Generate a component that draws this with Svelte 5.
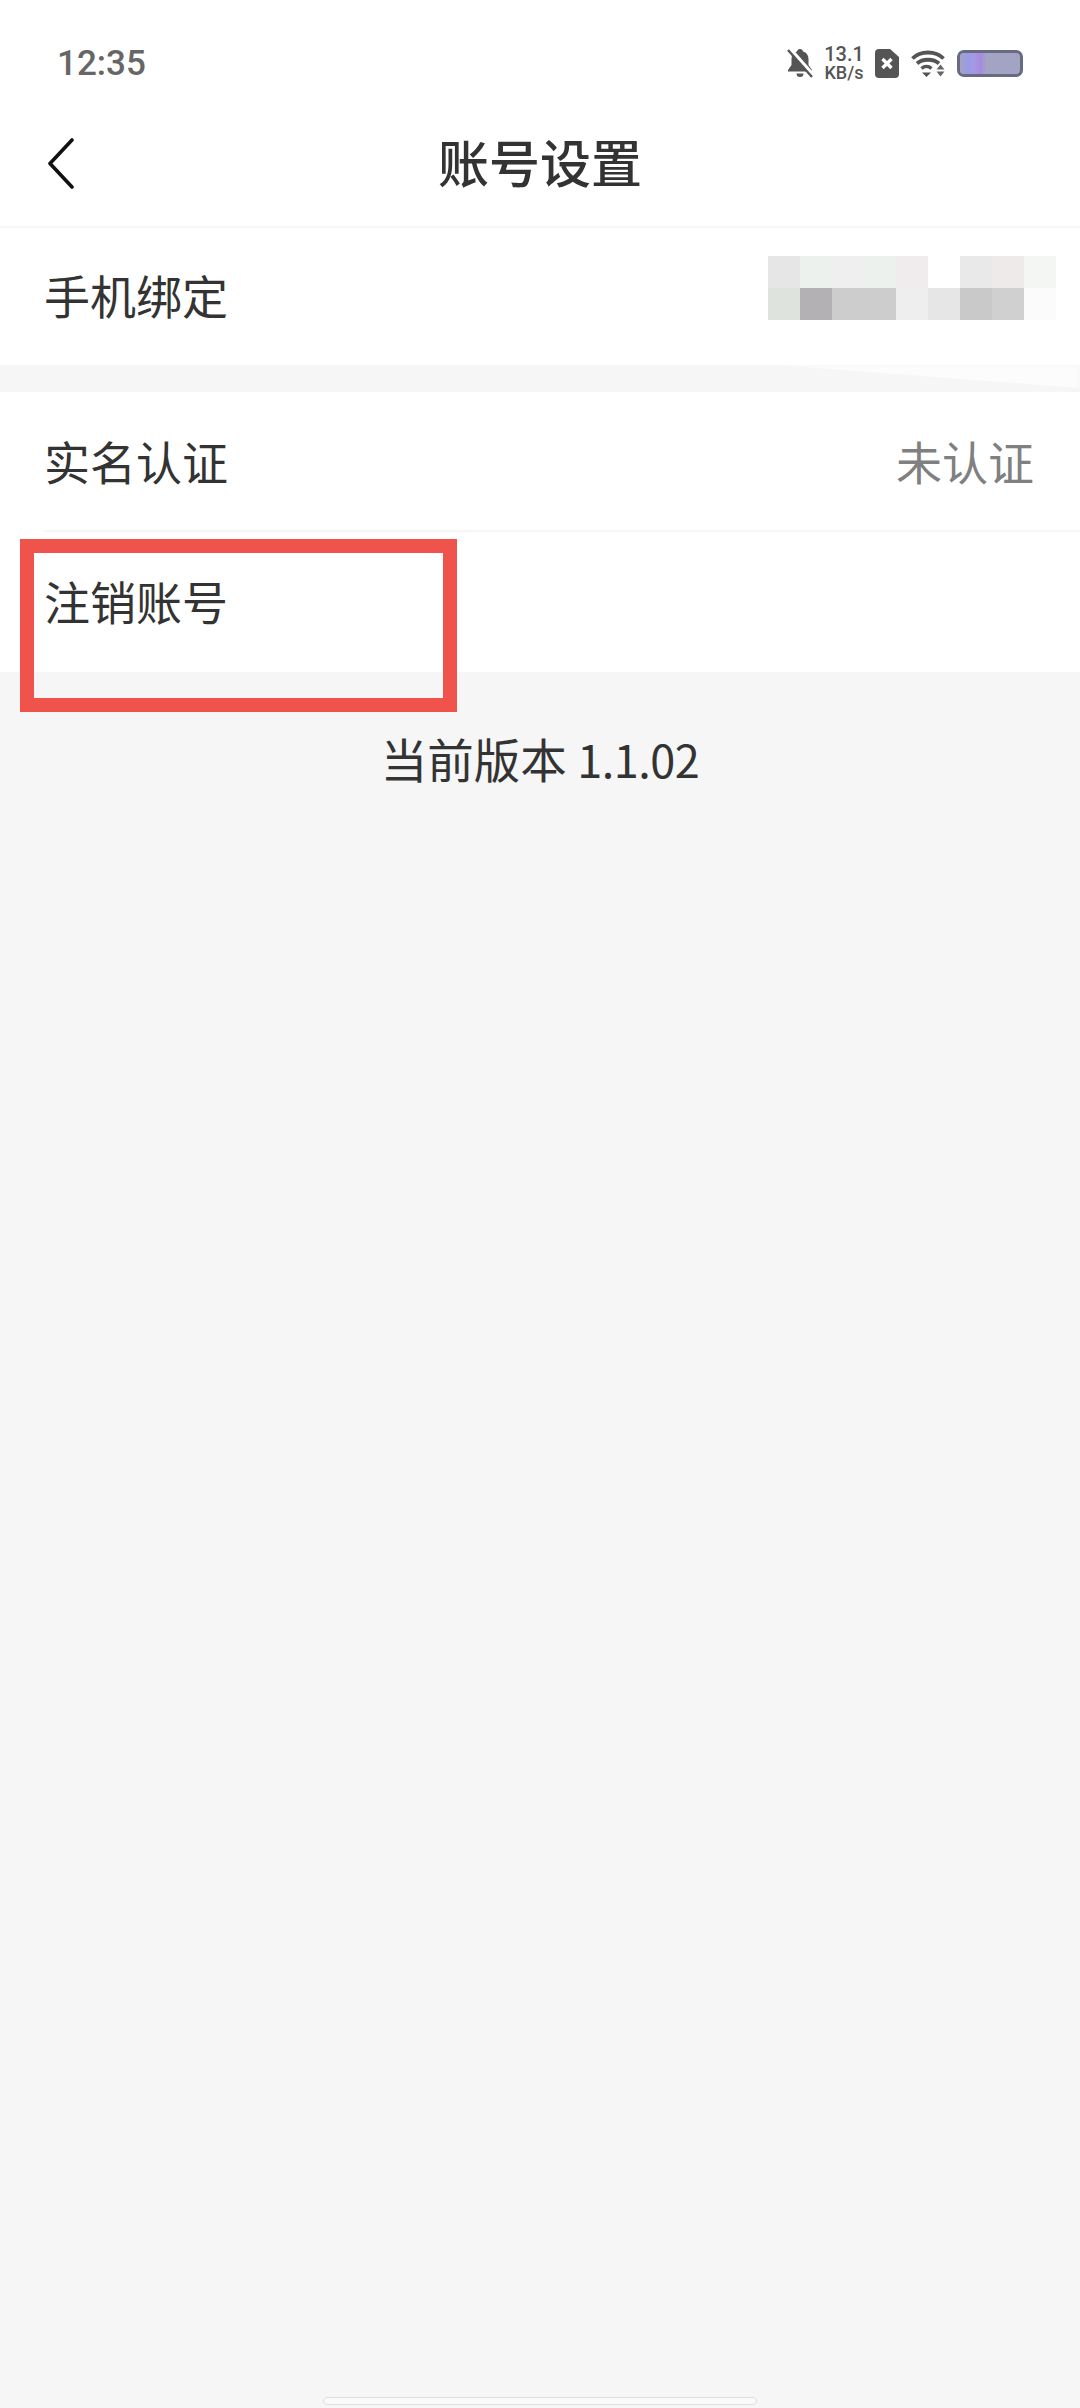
<script>
  const mosaic = [
    '#e6e6e6', '#edf1ee', '#efefef', '#edf1ee', '#f0ecee', '#ffffff', '#e8e9e8', '#efeaea', '#f4f6f4',
    '#dfe3de', '#b3b1b3', '#cdcdcd', '#cdcdcd', '#eeeeee', '#e6e6e6', '#c9c9c9', '#d0d0d0', '#fafbfa'
  ];
</script>

<div class="page">
  <header class="status">
    <span class="time">12:35</span>
    <div class="indicators">
      <svg class="bell" viewBox="0 0 26 30" width="26" height="30">
        <path d="M13 1c1.800 0 2.800 1 3 2.500 3.600 1 5.500 4 5.500 7.500v6l3.500 5v1.500H1V22l3.500-5v-6C4.500 7.500 6.400 4.500 10 3.500 10.200 2 11.200 1 13 1z" fill="#555" />
        <path d="M9.500 25.500h7a3.500 3.500 0 0 1-7 0z" fill="#555" />
        <path d="M3 1l23 26" stroke="#fff" stroke-width="4" />
        <path d="M1 2l24 27" stroke="#555" stroke-width="2.400" />
      </svg>
      <div class="speed"><span>13.1</span><span>KB/s</span></div>
      <svg class="sim" viewBox="0 0 24 29" width="24" height="29">
        <path d="M4 0h11l9 8v17a4 4 0 0 1-4 4H4a4 4 0 0 1-4-4V4a4 4 0 0 1 4-4z" fill="#555" />
        <path d="M7.500 10l9 9M16.500 10l-9 9" stroke="#fff" stroke-width="3.400" />
      </svg>
      <svg class="wifi" viewBox="0 0 34 28" width="34" height="28">
        <path d="M1.500 9.500C9.500 1.500 24.500 1.500 32.500 9.500" fill="none" stroke="#555" stroke-width="3.800" />
        <path d="M6 14.500c5.500-5 16.500-5 22 0" fill="none" stroke="#555" stroke-width="3.800" />
        <path d="M10.500 19.500c3-2.600 7-2.600 10 0" fill="none" stroke="#555" stroke-width="3.400" />
        <path d="M11 23.500h9l-4.500 4.500z" fill="#555" />
        <path d="M29.500 15.500l4 5h-8zM25.500 22.500h8l-4 5z" fill="#666" />
      </svg>
      <div class="battery"><div class="level"></div></div>
    </div>
  </header>

  <nav class="title-bar">
    <svg class="back" viewBox="0 0 30 52" width="30" height="52">
      <path d="M26 3 4 26.500 26 50" fill="none" stroke="#111" stroke-width="3.600" stroke-linecap="round" stroke-linejoin="round" />
    </svg>
    <h1>账号设置</h1>
  </nav>

  <section class="row phone">
    <span class="label">手机绑定</span>
    <div class="mosaic">
      {#each mosaic as color}
        <i style="background: {color}"></i>
      {/each}
    </div>
  </section>

  <div class="gap"></div>

  <section class="row auth">
    <span class="label">实名认证</span>
    <span class="value">未认证</span>
  </section>

  <section class="row cancel">
    <span class="label">注销账号</span>
  </section>

  <p class="version">当前版本 <span class="num">1.1.02</span></p>

  <div class="highlight"></div>
  <div class="home-bar"></div>
</div>

<style>
  :global(body) {
    margin: 0;
    background: #f6f6f6;
  }

  .page {
    position: relative;
    height: 2408px;
    overflow: hidden;
    background: #f6f6f6;
    color: #333;
    font-family: "Noto Sans CJK SC", "Noto Sans", sans-serif;
  }

  .status {
    display: flex;
    justify-content: space-between;
    align-items: center;
    height: 62px;
    padding: 32px 57px 0 57px;
    background: #fff;
  }

  .time {
    font-family: Roboto, sans-serif;
    font-size: 35px;
    font-weight: 500;
    color: #666;
  }

  .indicators {
    display: flex;
    align-items: center;
    gap: 12px;
  }

  .speed {
    display: flex;
    flex-direction: column;
    align-items: center;
    width: 38px;
    font-family: Roboto, sans-serif;
    font-size: 18px;
    font-weight: 500;
    line-height: 18px;
    color: #555;
  }

  .speed span:first-child {
    font-size: 20px;
    line-height: 20px;
  }

  .battery {
    width: 66px;
    height: 27px;
    box-sizing: border-box;
    border: 3px solid #666b80;
    border-radius: 7px;
    background: #a3a3c4;
    overflow: hidden;
  }

  .level {
    width: 26px;
    height: 100%;
    background: linear-gradient(90deg, #a3a3c4 0, #9a9ae6 30%, #a49be0 55%, #a888e0 80%, #a3a3c4 100%);
  }

  .title-bar {
    position: relative;
    display: flex;
    align-items: center;
    justify-content: center;
    height: 132px;
    background: #fff;
    border-bottom: 2px solid #f6f6f6;
  }

  .back {
    position: absolute;
    left: 46px;
    top: 43px;
  }

  h1 {
    margin: 0;
    padding-top: 2px;
    font-size: 51px;
    font-weight: 500;
    line-height: 1;
    color: #333;
  }

  .row {
    position: relative;
    display: flex;
    justify-content: space-between;
    align-items: center;
    box-sizing: border-box;
    background: #fff;
    padding: 0 46px 0 44px;
  }

  .label {
    font-size: 46px;
    line-height: 1;
    color: #333;
  }

  .phone {
    height: 137px;
    padding-right: 24px;
    padding-bottom: 6px;
  }

  .phone .mosaic {
    margin-bottom: 12px;
  }

  .gap {
    position: relative;
    height: 27px;
  }

  .gap::after {
    content: "";
    position: absolute;
    inset: 0;
    background: #fff;
    opacity: 0.7;
    clip-path: polygon(72% 0, 100% 0, 100% 85%);
    filter: blur(3px);
  }

  .auth {
    height: 140px;
    padding-bottom: 4px;
  }

  .auth::after {
    content: "";
    position: absolute;
    left: 44px;
    right: 0;
    bottom: 0;
    height: 2px;
    background: #f6f6f6;
  }

  .cancel {
    align-items: flex-start;
    height: 140px;
    padding-top: 45px;
  }

  .value {
    font-size: 46px;
    line-height: 1;
    color: #808080;
  }

  .mosaic {
    display: grid;
    grid-template-columns: repeat(9, 32px);
    grid-auto-rows: 32px;
  }

  .version {
    margin: 63px 0 0;
    text-align: center;
    font-size: 46.500px;
    line-height: 1;
    color: #333;
  }

  .num {
    font-size: 45px;
    letter-spacing: -0.5px;
  }

  .highlight {
    position: absolute;
    left: 20px;
    top: 539px;
    width: 437px;
    height: 173px;
    box-sizing: border-box;
    border: 14px solid #f0534c;
  }

  .home-bar {
    position: absolute;
    left: 323px;
    top: 2397px;
    width: 434px;
    height: 8px;
    box-sizing: border-box;
    border: 1px solid #dfdfdf;
    border-radius: 4px;
    background: #fafafa;
  }
</style>
